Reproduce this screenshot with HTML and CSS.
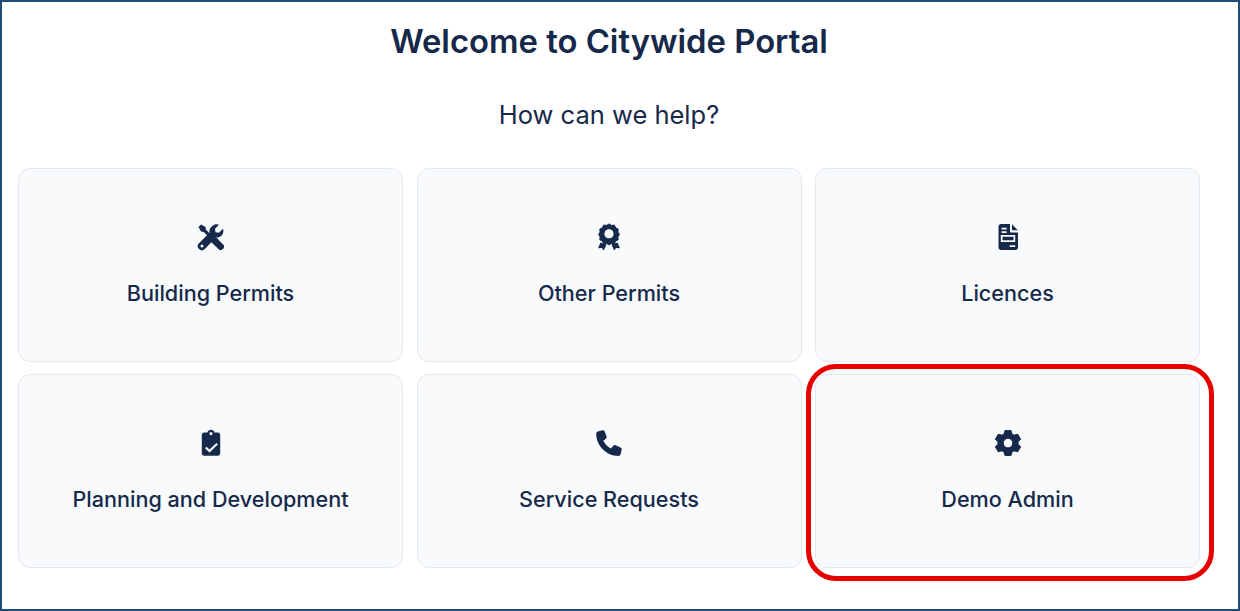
FILE: index.html
```html
<!DOCTYPE html>
<html lang="en">
<head>
  <meta charset="UTF-8">
  <meta name="viewport" content="width=device-width, initial-scale=1.0">
  <title>Citywide Portal</title>
  <link rel="stylesheet" href="styles.css">
</head>
<body>
  <div class="frame">
    <main class="portal">
      <h1>Welcome to Citywide Portal</h1>
      <p class="subtitle">How can we help?</p>
      <div class="cards">
        <a class="card" href="#building">
          <svg class="icon" viewBox="0 0 28 28">
            <path d="M1.500 4 4 1.500 8.500 4 9 6.800 15 12.800 12.800 15 6.800 9 4 8.500z"/>
            <path d="M17 12 27 22.500Q27.500 24.500 26 26 24.500 27.500 22.500 27L12 17z"/>
            <path fill-rule="evenodd" d="M19 1.200c1.100-.1 2.100.1 3 .5l-4 4 .5 3.500 3.500.5 4-4c.9 2.500.3 5.200-1.600 7.100-1.600 1.500-3.600 2.100-5.500 1.700L7.800 26a4 4 0 0 1-5.800-5.800L12.500 9.700c-.4-1.900.1-4 1.600-5.500 1.300-1.500 3.100-2.800 4.900-3zM5 21.500a1.500 1.500 0 1 0 0 3 1.500 1.500 0 0 0 0-3z"/>
          </svg>
          <span class="label">Building Permits</span>
        </a>
        <a class="card" href="#other">
          <svg class="icon" viewBox="0 0 28 28">
            <path class="thick" fill-rule="evenodd" d="M14 .9l2.500 1.500 2.900-.3 1.200 2.700 2.600 1.300-.3 2.900 1.500 2.400-1.500 2.500.3 2.900-2.600 1.200-1.200 2.700-2.900-.3-2.500 1.500-2.500-1.500-2.900.3-1.200-2.700-2.600-1.200.3-2.900-1.500-2.500 1.500-2.400-.3-2.900 2.600-1.300 1.200-2.700 2.900.3zM14 5.700a5.100 5.100 0 1 0 0 10.200 5.100 5.100 0 0 0 0-10.200z"/>
            <path d="M5.500 19.500 11.600 21.500 8.800 27.400 6.900 25 3 25.300z"/>
            <path d="M22.500 19.500 16.400 21.500 19.200 27.400 21.100 25 25 25.300z"/>
          </svg>
          <span class="label">Other Permits</span>
        </a>
        <a class="card" href="#licences">
          <svg class="icon" viewBox="0 0 28 28">
            <path fill-rule="evenodd" d="M7 1h9v7.200c0 .7.600 1.300 1.300 1.300H24v15c0 1.400-1.100 2.500-2.500 2.500h-14.500C5.600 27 4.500 25.900 4.500 24.500v-21C4.500 2.100 5.600 1 7 1zM7.600 4.800v1.700h5V4.800zM7.600 8.200v1.700h5V8.200zM6.800 12v7h14.400v-7zM8.500 13.700h11v3.600h-11zM15.800 22.300v1.700h5.400v-1.700z"/>
            <path d="M18 1.200 23.800 7.200H18z"/>
          </svg>
          <span class="label">Licences</span>
        </a>
        <a class="card" href="#planning">
          <svg class="icon" viewBox="0 0 28 28">
            <path fill-rule="evenodd" d="M14 .8c1.700 0 3.100 1.100 3.600 2.700h3.200c1.300 0 2.400 1.100 2.400 2.400v18.400c0 1.300-1.100 2.400-2.400 2.400H7.200c-1.300 0-2.400-1.100-2.400-2.400V5.900c0-1.300 1.100-2.400 2.400-2.400h3.200C10.900 1.900 12.300.8 14 .8zM14 3a1.600 1.600 0 1 0 0 3.200A1.600 1.600 0 0 0 14 3zM19.400 13.900l-6.900 6.700-3-2.900-1.500 1.500 4.500 4.400 8.400-8.200z"/>
          </svg>
          <span class="label">Planning and Development</span>
        </a>
        <a class="card" href="#service">
          <svg class="icon" viewBox="0 0 28 28">
            <path d="M7.400 1.200 2.800 2.400C1.900 2.700 1.200 3.500 1.200 4.500c0 12.400 10 22.400 22.300 22.400 1 0 1.800-.7 2.100-1.600l1.100-4.600c.2-.9-.3-1.900-1.200-2.300l-5-2.100c-.8-.4-1.800-.1-2.400.6l-2.200 2.600c-3.300-1.700-6-4.400-7.600-7.700l2.600-2.100c.7-.6 1-1.600.6-2.400L9.700 2.400C9.300 1.500 8.300 1 7.400 1.200z"/>
          </svg>
          <span class="label">Service Requests</span>
        </a>
        <a class="card" href="#admin">
          <svg class="icon" viewBox="0 0 28 28">
            <path class="thick" fill-rule="evenodd" d="M11 1.500h6l.9 3.400 2.200 1.300 3.600-1 3 5-2.700 2.500v2.600l2.700 2.500-3 5-3.600-1-2.200 1.300-.9 3.400h-6l-.9-3.400-2.200-1.300-3.600 1-3-5 2.700-2.500v-2.600l-2.700-2.500 3-5 3.600 1 2.200-1.300zM14 9.300a4.800 4.800 0 1 0 0 9.600 4.800 4.800 0 0 0 0-9.600z"/>
          </svg>
          <span class="label">Demo Admin</span>
        </a>
      </div>
    </main>
    <div class="highlight"></div>
  </div>
</body>
</html>
```

FILE: styles.css
```css
* {
  box-sizing: border-box;
}
body {
  margin: 0;
  font-family: Inter, "Noto Sans", sans-serif;
  color: #16294a;
  background: #fff;
}
.frame {
  position: relative;
  width: 1240px;
  height: 611px;
  border: 2px solid #1f4e79;
  overflow: hidden;
}
.portal {
  width: 1182px;
  margin-left: 16px;
}
h1 {
  margin: 0;
  padding-top: 19px;
  font-size: 32.8px;
  line-height: 40px;
  font-weight: 600;
  text-align: center;
}
.subtitle {
  margin: 0;
  padding-top: 38px;
  font-size: 25.5px;
  line-height: 32px;
  font-weight: 400;
  text-align: center;
}
.cards {
  display: grid;
  grid-template-columns: repeat(3, 385px);
  grid-auto-rows: 193.5px;
  column-gap: 13.5px;
  row-gap: 12.5px;
  margin-top: 37px;
}
.card {
  display: flex;
  flex-direction: column;
  align-items: center;
  justify-content: center;
  gap: 28px;
  color: inherit;
  text-decoration: none;
  background: #f8fafc;
  border: 1px solid #e2e8f0;
  border-radius: 12px;
}
.icon {
  width: 28px;
  height: 28px;
  fill: #16294a;
}
.thick {
  stroke: #16294a;
  stroke-width: 1;
  stroke-linejoin: round;
}
.label {
  font-size: 21.6px;
  line-height: 28px;
  font-weight: 500;
}
.highlight {
  position: absolute;
  left: 804px;
  top: 362px;
  width: 408px;
  height: 217px;
  border: 5px solid #e60000;
  border-radius: 30px;
}
```
